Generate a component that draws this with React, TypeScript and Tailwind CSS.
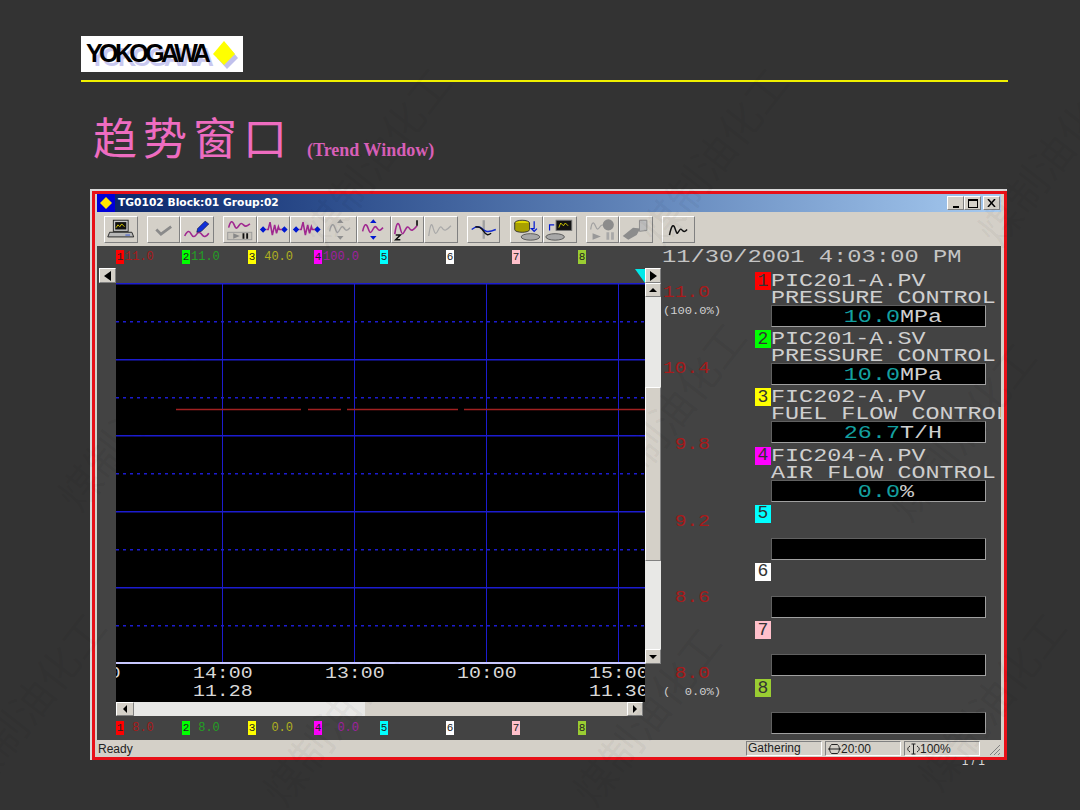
import type { ReactNode } from "react";

const mono = "font-['Liberation_Mono',monospace]";

const topLegend = [
  { n: "1", bg: "bg-[#ff0000]", color: "text-[#a81a1a]", text: "11.0" },
  { n: "2", bg: "bg-[#00ff00]", color: "text-[#23a023]", text: "11.0" },
  { n: "3", bg: "bg-[#ffff00]", color: "text-[#b0b020]", text: " 40.0" },
  { n: "4", bg: "bg-[#ff00ff]", color: "text-[#a020a0]", text: "100.0" },
  { n: "5", bg: "bg-[#00ffff]", color: "text-white", text: "" },
  { n: "6", bg: "bg-white", color: "text-white", text: "" },
  { n: "7", bg: "bg-[#ffc0cb]", color: "text-white", text: "" },
  { n: "8", bg: "bg-[#9acd32]", color: "text-white", text: "" },
];

const bottomLegend = [
  { ...topLegend[0], text: " 8.0" },
  { ...topLegend[1], text: " 8.0" },
  { ...topLegend[2], text: "  0.0" },
  { ...topLegend[3], text: "  0.0" },
  topLegend[4],
  topLegend[5],
  topLegend[6],
  topLegend[7],
];

const channels = [
  { n: "1", bg: "bg-[#ff0000]", tag: "PIC201-A.PV", name: "PRESSURE CONTROL", value: "10.0", unit: "MPa" },
  { n: "2", bg: "bg-[#00ff00]", tag: "PIC201-A.SV", name: "PRESSURE CONTROL", value: "10.0", unit: "MPa" },
  { n: "3", bg: "bg-[#ffff00]", tag: "FIC202-A.PV", name: "FUEL FLOW CONTROL", value: "26.7", unit: "T/H" },
  { n: "4", bg: "bg-[#ff00ff]", tag: "FIC204-A.PV", name: "AIR FLOW CONTROL", value: "0.0", unit: "%" },
  { n: "5", bg: "bg-[#00ffff]", tag: "", name: "", value: "", unit: "" },
  { n: "6", bg: "bg-white", tag: "", name: "", value: "", unit: "" },
  { n: "7", bg: "bg-[#ffc0cb]", tag: "", name: "", value: "", unit: "" },
  { n: "8", bg: "bg-[#9acd32]", tag: "", name: "", value: "", unit: "" },
];

const scale = [
  { value: "11.0", note: "(100.0%)" },
  { value: "10.4", note: "" },
  { value: " 9.8", note: "" },
  { value: " 9.2", note: "" },
  { value: " 8.6", note: "" },
  { value: " 8.0", note: "(  0.0%)" },
];

const times = [
  { time: "16:00", date: "" },
  { time: "14:00", date: "11.28" },
  { time: "13:00", date: "" },
  { time: "10:00", date: "" },
  { time: "15:00", date: "11.30" },
];

const watermarks = [
  [375, 155], [712, 155], [1050, 155],
  [130, 420], [670, 410], [960, 430],
  [30, 700], [335, 715], [645, 715], [990, 700],
];

const raised = "border border-t-white border-l-white border-r-[#808080] border-b-[#808080] bg-[#d4d0c8]";
const sunken = "border border-b-white border-r-white border-t-[#808080] border-l-[#808080]";

const wave = "M5 15c2-9 4-9 6-3s3 5 5 1 3-4 5-1 3 2 6-1";

function Tool({ children }: { children: ReactNode }) {
  return (
    <div className={`${raised} h-[27px] w-[33.5px] shrink-0`}>
      <svg viewBox="0 0 34 26" className="h-full w-full" fill="none">
        {children}
      </svg>
    </div>
  );
}

function Diamonds() {
  return (
    <>
      <path d="M2 13l3.5-3.5L9 13l-3.500 3.500zM25 13l3.500-3.500L32 13l-3.500 3.500z" fill="#0018d0" />
      <path d="M9 13h2l2-8 2.500 14L18 8l2 9 2-7 1 3h3" stroke="#a02890" strokeWidth="1.7" />
    </>
  );
}

function Toolbar() {
  return (
    <div className="flex h-[34px] items-center bg-[#d4d0c8] pl-[7px]">
      <Tool>
        <rect x="9" y="3" width="16" height="12" fill="#c8c8c8" stroke="#222" />
        <rect x="11" y="5" width="12" height="8" fill="#101010" />
        <path d="M12 11l2-3 2 2 2-3 3 3" stroke="#e0d000" />
        <path d="M5 16h24l2 5H3z" fill="#b8b8b8" stroke="#222" />
        <path d="M22 19h5" stroke="#3050d0" />
      </Tool>
      <div className="w-[9px] shrink-0" />
      <Tool>
        <path d="M9 13l5 5 11-8" stroke="#8a8a8a" strokeWidth="3" />
      </Tool>
      <Tool>
        <path d="M4 20c3-6 5-6 7-2s4 3 6 0 4-2 6 1 5 1 7-2" stroke="#a02890" strokeWidth="1.7" />
        <path d="M18 12l8-8 4 3-8 8-5 1z" fill="#1030d8" stroke="#101040" strokeWidth="0.7" />
      </Tool>
      <div className="w-[9.5px] shrink-0" />
      <Tool>
        <path d="M5 11c2-8 4-8 6-3s3 4 5 1 3-3 5-1 3 2 7-1" stroke="#a02890" strokeWidth="1.7" />
        <rect x="4" y="16" width="26" height="8" fill="#c8c4bc" stroke="#999" />
        <path d="M10 17v6l7-3z" fill="#888" />
        <path d="M20 17h2v6h-2zM24 17h2v6h-2z" fill="#111" />
      </Tool>
      <Tool>
        <Diamonds />
      </Tool>
      <Tool>
        <Diamonds />
      </Tool>
      <Tool>
        <path d={wave} stroke="#a0a0a0" strokeWidth="1.5" />
        <path d="M13 6l3.500-4 3.500 4zM13 20l3.500 4 3.500-4z" fill="#909090" />
      </Tool>
      <Tool>
        <path d={wave} stroke="#a02890" strokeWidth="1.7" />
        <path d="M13 6l3.500-4 3.500 4zM13 20l3.500 4 3.500-4z" fill="#0018d0" />
      </Tool>
      <Tool>
        <path d="M3 18c2-14 4-14 6-6s3 6 5 2 3-5 5-2 4 2 8-3" stroke="#a02890" strokeWidth="1.7" />
        <path d="M27 3v6" stroke="#111" strokeWidth="1.8" />
        <path d="M4 19h5l-5 5h5" stroke="#111" strokeWidth="1.6" />
      </Tool>
      <Tool>
        <path d="M4 20c2-14 3-15 5-8s3 6 5 2 3-5 5-2 4 2 9-3" stroke="#a8a8a8" strokeWidth="1.3" />
      </Tool>
      <div className="w-[9px] shrink-0" />
      <Tool>
        <path d="M17 3v20" stroke="#a0a0a0" strokeWidth="2.5" />
        <path d="M4 13c4-3 8-4 11-1s6 5 15 1" stroke="#1028d0" strokeWidth="1.6" />
        <path d="M8 10c3 0 6 0 9 5s5 4 8 2" stroke="#111" strokeWidth="1.5" />
      </Tool>
      <div className="w-[9.5px] shrink-0" />
      <Tool>
        <ellipse cx="12" cy="6" rx="8" ry="3" fill="#e0d800" stroke="#333" />
        <path d="M4 6v7c0 4 16 4 16 0V6" fill="#a8a000" stroke="#333" />
        <path d="M25 4v8h-3l3 3 3-3" stroke="#0018d0" strokeWidth="1.3" />
        <ellipse cx="21" cy="21" rx="10" ry="3.500" fill="#a8a8a8" stroke="#555" />
      </Tool>
      <Tool>
        <rect x="13" y="3" width="17" height="11" fill="#111" stroke="#777" />
        <path d="M16 11l2-5 3 3 2-3 3 3" stroke="#d8d000" />
        <path d="M6 14V8h5" stroke="#0018d0" strokeWidth="1.3" />
        <ellipse cx="12" cy="21" rx="10" ry="3.500" fill="#a8a8a8" stroke="#555" />
      </Tool>
      <div className="w-[9px] shrink-0" />
      <Tool>
        <path d="M4 13c1-8 3-9 5-4s3 4 5 1 3-2 5-1" stroke="#a0a0a0" strokeWidth="1.3" />
        <circle cx="23" cy="8" r="6" fill="#8c8c8c" />
        <path d="M6 17v7l9-3.500z" fill="#999" />
        <path d="M21 16h3v8h-3zM26 16h3v8h-3z" fill="#a8a8a8" />
      </Tool>
      <Tool>
        <path d="M3 20l11-9 8 1-4 7-9 5z" fill="#8c8c8c" />
        <path d="M21 3h8v11l-8 1z" fill="#bdbdbd" stroke="#8a8a8a" />
      </Tool>
      <div className="w-[9px] shrink-0" />
      <Tool>
        <path d="M7 19c2-10 4-13 6-7s2 6 4 3 2-3 4-1 3 1 5-1" stroke="#111" strokeWidth="1.6" />
      </Tool>
    </div>
  );
}

function Legend({ items, className }: { items: typeof topLegend; className: string }) {
  return (
    <div className={`flex pl-[19px] ${className}`}>
      {items.map((item) => (
        <div key={item.n} className="flex w-[66px] items-center">
          <span className={`${item.bg} flex h-[14px] w-[8px] shrink-0 items-center justify-center ${mono} text-[11px] text-[#222]`}>
            {item.n}
          </span>
          <span className={`${mono} ${item.color} whitespace-pre pl-px text-[12px]`}>{item.text}</span>
        </div>
      ))}
    </div>
  );
}

function ScrollBtn({ children, className }: { children: ReactNode; className: string }) {
  return <div className={`${raised} flex shrink-0 items-center justify-center ${className}`}>{children}</div>;
}

function Chart() {
  return (
    <div className="h-[381px] w-[529px] shrink-0 bg-black">
      <svg viewBox="0 0 529 381" className="block h-full w-full">
        {[0, 76, 152, 228, 304].map((y) => (
          <line key={y} x1="0" x2="529" y1={y + 0.75} y2={y + 0.75} stroke="#1c1cd0" strokeWidth="1.5" />
        ))}
        {[38, 114, 190, 266, 342].map((y) => (
          <line key={y} x1="0" x2="529" y1={y + 0.75} y2={y + 0.75} stroke="#1c1cd0" strokeWidth="1.5" strokeDasharray="3 4" />
        ))}
        {[106, 238, 370, 502].map((x) => (
          <line key={x} x1={x + 0.5} x2={x + 0.5} y1="0" y2="381" stroke="#1c1cd0" />
        ))}
        <path d="M60 126.500h125M192 126.500h33M231 126.500h111M348 126.500h181" stroke="#a02020" strokeWidth="1.5" />
        <line x1="0" x2="529" y1="380" y2="380" stroke="#c8c8ff" strokeWidth="2" />
      </svg>
    </div>
  );
}

function TrendColumn() {
  return (
    <div className="w-[564px] shrink-0">
      <div className="flex h-[15px] items-center justify-between pl-[2px]">
        <ScrollBtn className="h-[15px] w-[17px]">
          <span className="h-0 w-0 border-y-[5px] border-r-[7px] border-y-transparent border-r-black" />
        </ScrollBtn>
        <div className="flex items-center">
          <span className="h-0 w-0 border-t-[14px] border-l-[10px] border-t-[#00e8e8] border-l-transparent" />
          <ScrollBtn className="h-[15px] w-[16px]">
            <span className="h-0 w-0 border-y-[5px] border-l-[7px] border-y-transparent border-l-black" />
          </ScrollBtn>
        </div>
      </div>
      <div className="flex pl-[19px]">
        <Chart />
        <div className="flex h-[381px] w-[16px] shrink-0 flex-col">
          <ScrollBtn className="h-[14px] w-full">
            <span className="h-0 w-0 border-x-[4px] border-b-[4px] border-x-transparent border-b-black" />
          </ScrollBtn>
          <div className="h-[90px] bg-[#e8e8e6]" />
          <div className={`${raised} h-[174px]`} />
          <div className="flex-1 bg-[#e8e8e6]" />
          <ScrollBtn className="h-[15px] w-full">
            <span className="h-0 w-0 border-x-[4px] border-t-[4px] border-x-transparent border-t-black" />
          </ScrollBtn>
        </div>
      </div>
      <div className="ml-[19px] flex h-[38px] w-[529px] overflow-hidden bg-black">
        <div className={`-ml-[55px] flex ${mono} text-[17px] leading-[18px] text-[#d8d8d8]`}>
          {times.map((t) => (
            <div key={t.time} className="w-[132px] shrink-0 pt-px">
              <div className="origin-left scale-x-[1.17] whitespace-pre">{t.time}</div>
              <div className="origin-left scale-x-[1.17] whitespace-pre">{t.date || " "}</div>
            </div>
          ))}
        </div>
      </div>
      <div className="ml-[19px] flex h-[14px] w-[527px]">
        <ScrollBtn className="h-[14px] w-[18px]">
          <span className="h-0 w-0 border-y-[4px] border-r-[4px] border-y-transparent border-r-black" />
        </ScrollBtn>
        <div className="w-[231px] bg-[#e8e8e6]" />
        <div className="flex-1 bg-[#d4d0c8]" />
        <ScrollBtn className="h-[14px] w-[16px]">
          <span className="h-0 w-0 border-y-[4px] border-l-[4px] border-y-transparent border-l-black" />
        </ScrollBtn>
      </div>
      <Legend items={bottomLegend} className="h-[24px]" />
    </div>
  );
}

function ScaleColumn() {
  return (
    <div className="w-[94px] shrink-0 pl-[2px] pt-[16px]">
      {scale.map((s) => (
        <div key={s.value} className="h-[76.2px]">
          <div className={`${mono} origin-left scale-x-[1.22] whitespace-pre text-[16px] leading-[18px] text-[#a81a1a]`}>{s.value}</div>
          {s.note ? (
            <div className={`${mono} origin-left scale-x-[1.1] whitespace-pre pt-[3px] text-[11px] leading-[12px] text-[#d0d0d0]`}>{s.note}</div>
          ) : null}
        </div>
      ))}
    </div>
  );
}

function ChannelPanel() {
  return (
    <div className="min-w-0 flex-1 overflow-hidden pt-[4px]">
      {channels.map((c) => (
        <div key={c.n} className="h-[58.2px]">
          <div className="flex h-[18px]">
            <span className={`${c.bg} flex h-[18px] w-[16px] shrink-0 items-center justify-center ${mono} text-[18px] text-[#333]`}>
              {c.n}
            </span>
            <span className={`${mono} origin-left scale-x-[1.3] whitespace-pre text-[18px] leading-[18px] text-[#cfcfcf]`}>{c.tag}</span>
          </div>
          <div className={`${mono} h-[15px] origin-left translate-x-[16px] scale-x-[1.3] whitespace-pre pt-px text-[18px] leading-[15px] text-[#cfcfcf]`}>
            {c.name || " "}
          </div>
          <div className="ml-[16px] flex h-[22px] w-[215px] border border-b-[#a0a0a0] border-r-[#a0a0a0] border-t-[#606060] border-l-[#606060] bg-black">
            <div className={`${mono} w-[128px] origin-right scale-x-[1.3] pt-[1px] text-right text-[18px] leading-[20px] text-[#14a0a0]`}>{c.value}</div>
            <div className={`${mono} origin-left scale-x-[1.3] pt-[1px] text-[18px] leading-[20px] text-[#cfcfcf]`}>{c.unit}</div>
          </div>
        </div>
      ))}
    </div>
  );
}

function StatusBar() {
  return (
    <div className="flex h-[17px] items-center bg-[#d4d0c8] pl-[1px] font-['Liberation_Sans',sans-serif] text-[12px] text-[#222]">
      <span className="w-[648px]">Ready</span>
      <span className={`h-[15px] w-[76px] ${sunken} pl-px leading-[13px]`}>Gathering</span>
      <span className={`ml-[3px] flex h-[15px] w-[76px] items-center ${sunken} pl-[2px]`}>
        <svg width="13" height="12" viewBox="0 0 13 12" fill="none" stroke="#222" className="shrink-0">
          <path d="M3.500 1.500C1 4 1 8 3.500 10.500h6C12 8 12 4 9.500 1.500zM0 6h13" />
        </svg>
        20:00
      </span>
      <span className={`ml-[3px] flex h-[15px] w-[76px] items-center ${sunken} pl-[2px]`}>
        <svg width="13" height="12" viewBox="0 0 13 12" fill="none" stroke="#222" className="shrink-0">
          <path d="M4.500 1h4M4.500 11h4M6.500 1v10M3 3c-3 2-3 4 0 6M10 3c3 2 3 4 0 6" />
        </svg>
        100%
      </span>
      <svg width="14" height="14" viewBox="0 0 14 14" className="ml-auto" stroke="#808080">
        <path d="M3 13L13 3M7 13l6-6M11 13l2-2" />
      </svg>
    </div>
  );
}

function TrendWindow() {
  return (
    <div className="ml-[9px] w-[917px] border-l-2 border-t-2 border-[#d8d8d8]">
      <div className="border-[3px] border-[#e81018] bg-[#d4d0c8] pl-[2px] pr-[3px]">
        <div className="flex h-[18px] items-center bg-gradient-to-r from-[#0a246a] to-[#a6caf0] pr-[1px]">
          <div className="flex h-[18px] w-[18px] items-center justify-center bg-[#0000d8]">
            <svg width="14" height="14" viewBox="0 0 14 14">
              <path d="M7 1l6 6-6 6-6-6z" fill="#ffe800" />
            </svg>
          </div>
          <span className="pl-[3px] font-['DejaVu_Sans',sans-serif] text-[10.7px] font-bold text-white">TG0102 Block:01 Group:02</span>
          <div className="ml-auto flex">
            <ScrollBtn className="h-[14px] w-[17px]">
              <span className="mt-[7px] h-[2px] w-[6px] bg-black" />
            </ScrollBtn>
            <ScrollBtn className="h-[14px] w-[17px]">
              <span className="h-[9px] w-[10px] border border-t-2 border-black" />
            </ScrollBtn>
            <ScrollBtn className="ml-[2px] h-[14px] w-[17px]">
              <svg width="9" height="8" viewBox="0 0 9 8" stroke="#000" strokeWidth="1.5">
                <path d="M1 0l7 8M8 0l-7 8" />
              </svg>
            </ScrollBtn>
          </div>
        </div>
        <Toolbar />
        <div className="h-[494px] bg-[#434343]">
          <div className="flex h-[22px]">
            <div className="w-[565px] shrink-0">
              <Legend items={topLegend} className="h-[22px]" />
            </div>
            <div className={`${mono} origin-left scale-x-[1.32] whitespace-pre text-[18px] leading-[22px] text-[#c4c4c4]`}>11/30/2001 4:03:00 PM</div>
          </div>
          <div className="flex">
            <TrendColumn />
            <ScaleColumn />
            <ChannelPanel />
          </div>
        </div>
        <StatusBar />
      </div>
    </div>
  );
}

export default function App() {
  return (
    <div className="relative h-[810px] w-[1080px] overflow-hidden bg-[#333333] pl-[81px] pr-[72px] pt-[36px]">
      <div className="flex h-[36px] w-[162px] items-center justify-between bg-white pl-[5px] pr-[3px]">
        <span className="font-['Liberation_Sans',sans-serif] text-[25px] font-bold tracking-[-3.6px] text-black [text-shadow:3px_4px_0_#c8c8f0]">
          YOKOGAWA
        </span>
        <svg width="30" height="34" viewBox="0 0 30 34" className="shrink-0">
          <path d="M17 8l11 13-11 11L7 21z" fill="#c0c0ec" />
          <path d="M14 4l11 13-11 11L3 17z" fill="#ffff00" />
        </svg>
      </div>
      <div className="mt-[8px] h-[2px] bg-[#f0f000]" />
      <div className="ml-[12px] mt-[29px] flex h-[50px] items-end">
        <h1 className="w-[200px] shrink-0 font-['Noto_Sans_CJK_SC',sans-serif] text-[44px] font-normal leading-[50px] tracking-[6px] text-[#ee6cc0]">趋势窗口</h1>
        <span className="-mb-[3px] ml-[14px] font-['Liberation_Serif',serif] text-[18px] font-bold text-[#d85fb8]">(Trend Window)</span>
      </div>
      <div className="mt-[28px]">
        <TrendWindow />
      </div>
      <div className="flex h-[6px] justify-end overflow-hidden pr-[23px]">
        <span className="-mt-[6px] font-['Liberation_Sans',sans-serif] text-[12px] leading-[14px] text-[#d8d8d8]">1 / 1</span>
      </div>
      <div className="pointer-events-none absolute inset-0 overflow-hidden">
        {watermarks.map(([x, y]) => (
          <span
            key={`${x}-${y}`}
            className="absolute -translate-x-1/2 -translate-y-1/2 -rotate-[52deg] whitespace-nowrap font-['Noto_Sans_CJK_SC',sans-serif] text-[42px] text-black/[0.05]"
            style={{ left: x, top: y }}
          >
            煤制油化工
          </span>
        ))}
      </div>
    </div>
  );
}
